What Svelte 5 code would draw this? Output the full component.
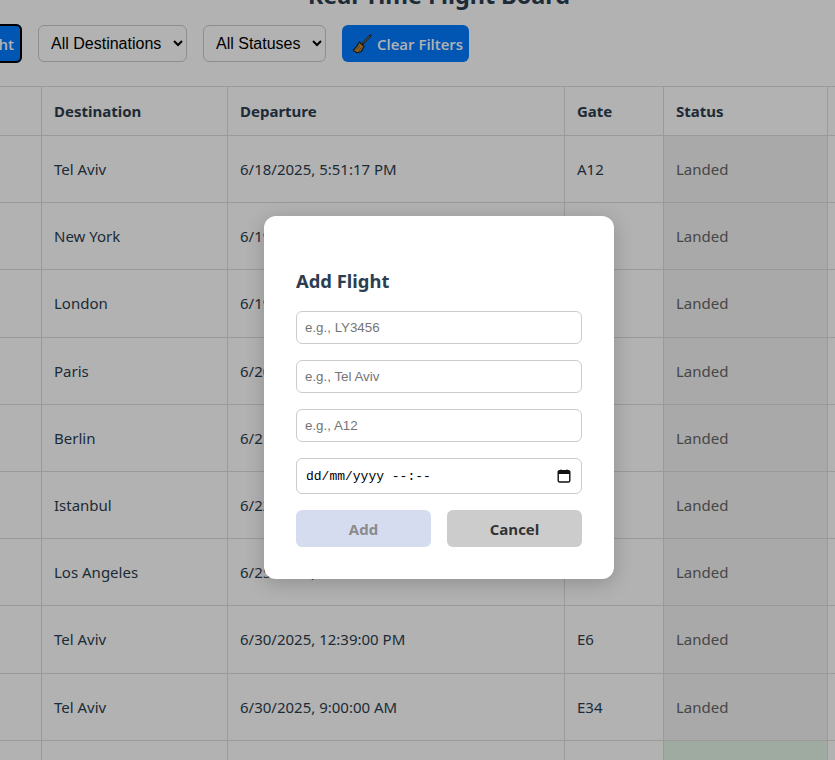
<script>
  const rows = [
    ['LY001', 'Tel Aviv', '6/18/2025, 5:51:17 PM', 'A12'],
    ['LY002', 'New York', '6/19/2025, 8:15:00 AM', 'B7'],
    ['LY003', 'London', '6/19/2025, 2:30:00 PM', 'C3'],
    ['LY004', 'Paris', '6/20/2025, 9:45:00 AM', 'D9'],
    ['LY005', 'Berlin', '6/21/2025, 11:20:00 AM', 'A4'],
    ['LY006', 'Istanbul', '6/22/2025, 4:05:00 PM', 'F2'],
    ['LY007', 'Los Angeles', '6/25/2025, 7:40:00 PM', 'G8'],
    ['LY008', 'Tel Aviv', '6/30/2025, 12:39:00 PM', 'E6'],
    ['LY009', 'Tel Aviv', '6/30/2025, 9:00:00 AM', 'E34'],
  ];
</script>

<div class="viewport">
  <div class="page">
    <h1>Real-Time Flight Board</h1>
    <div class="controls">
      <button class="btn add">Add Flight</button>
      <select><option>All Destinations</option></select>
      <select><option>All Statuses</option></select>
      <button class="btn">
        <svg width="20" height="20" viewBox="0 0 20 20" aria-hidden="true">
          <path d="M18.5 1.5 10.5 10" stroke="#2b2b2b" stroke-width="2.4" stroke-linecap="round" fill="none"/>
          <path d="M18.3 1.7 10.8 9.6" stroke="#a87a3e" stroke-width="0.9" fill="none"/>
          <path d="M7.4 8 12 12.4 9.4 17.4 5 18.8 1.2 16.4 4.8 12.4Z" fill="#c08a38" stroke="#1e1e1e" stroke-width="1.1" stroke-linejoin="round"/>
          <path d="M4.5 15.5 7.6 12.2M7 16.6 9.6 13.6" stroke="#6e4a1a" stroke-width="0.9"/>
        </svg>
        Clear Filters
      </button>
    </div>
    <table>
      <colgroup>
        <col class="c1" /><col class="c2" /><col class="c3" /><col class="c4" /><col class="c5" /><col class="c6" />
      </colgroup>
      <thead>
        <tr>
          <th>Flight</th><th>Destination</th><th>Departure</th><th>Gate</th><th>Status</th><th>Actions</th>
        </tr>
      </thead>
      <tbody>
        {#each rows as r}
          <tr>
            <td>{r[0]}</td><td>{r[1]}</td><td>{r[2]}</td><td>{r[3]}</td>
            <td class="landed">Landed</td><td></td>
          </tr>
        {/each}
        <tr>
          <td></td><td></td><td></td><td></td><td class="ontime"></td><td></td>
        </tr>
      </tbody>
    </table>
  </div>

  <div class="overlay">
    <div class="modal">
      <h2>Add Flight</h2>
      <input type="text" placeholder="e.g., LY3456" />
      <input type="text" placeholder="e.g., Tel Aviv" />
      <input type="text" placeholder="e.g., A12" />
      <div class="date">
        <span>dd/mm/yyyy --:--</span>
        <svg width="14" height="14" viewBox="0 0 14 14" aria-hidden="true">
          <path d="M2.6 1.6h8.8a1.4 1.4 0 0 1 1.4 1.4v8.6a1.4 1.4 0 0 1-1.4 1.4H2.6a1.4 1.4 0 0 1-1.4-1.4V3a1.4 1.4 0 0 1 1.4-1.4Z" fill="none" stroke="#111" stroke-width="1.4"/>
          <rect x="1.2" y="2" width="11.6" height="3" fill="#111"/>
          <rect x="3.4" y="0.6" width="1.4" height="2" fill="#111"/>
          <rect x="9.2" y="0.6" width="1.4" height="2" fill="#111"/>
        </svg>
      </div>
      <div class="actions">
        <button class="primary" disabled>Add</button>
        <button class="cancel">Cancel</button>
      </div>
    </div>
  </div>
</div>

<style>
  :global(body) { margin: 0; background: #fff; }
  .viewport {
    position: relative;
    width: 835px;
    height: 760px;
    overflow: hidden;
    font-family: "Noto Sans", "Open Sans", sans-serif;
  }
  .page { margin: -24px 0 0 -100px; width: 1035px; }
  h1 {
    margin: 0;
    height: 48px;
    width: 1078px;
    text-align: center;
    font-size: 23.4px;
    line-height: 38px;
    font-weight: 700;
    color: #2c3e50;
  }
  .controls {
    display: flex;
    align-items: center;
    gap: 16px;
    height: 37px;
    margin-bottom: 24px;
    padding-left: 14px;
    margin-top: 1px;
  }
  select {
    height: 37px;
    padding: 0 8px;
    font: 16px "Liberation Sans", Arial, sans-serif;
    border: 1px solid #ccc;
    border-radius: 6px;
    background: #fff;
    color: #000;
    box-sizing: border-box;
  }
  select:first-of-type { width: 149px; }
  select:last-of-type { width: 123px; }
  .btn {
    display: flex;
    align-items: center;
    gap: 5px;
    height: 37px;
    padding: 0 6px 0 10px;
    font: 600 15px "Open Sans", sans-serif;
    color: #fff;
    background: #007bff;
    border: 0;
    border-radius: 6px;
    white-space: nowrap;
  }
  .add {
    width: 108px;
    height: 39px;
    justify-content: flex-end;
    outline: 2px solid #000;
    outline-offset: -2px;
    padding-right: 8px;
  }
  table {
    table-layout: fixed;
    width: 1035px;
    border-collapse: collapse;
    color: #2c3e50;
    font-size: 15px;
  }
  .c1 { width: 141px; }
  .c2 { width: 186px; }
  .c3 { width: 337px; }
  .c4 { width: 99px; }
  .c5 { width: 164px; }
  .c6 { width: 108px; }
  th, td {
    border: 1px solid #ddd;
    padding: 0 12px;
    text-align: left;
  }
  th { height: 49px; box-sizing: border-box; font-weight: 700; }
  tbody tr { height: 67.2px; }
  .landed { background: #f2f2f2; color: #666; }
  .ontime { background: #e4f4e6; }
  .overlay {
    position: absolute;
    inset: 0;
    background: rgba(0, 0, 0, 0.3);
    display: flex;
    align-items: flex-start;
    padding: 216px 0 0 264px;
    box-sizing: border-box;
  }
  .modal {
    width: 350px;
    height: 363px;
    box-sizing: border-box;
    padding: 51px 32px 32px;
    background: #fff;
    border-radius: 12px;
    box-shadow: 0 4px 20px rgba(0, 0, 0, 0.2);
    display: flex;
    flex-direction: column;
    gap: 16px;
  }
  h2 {
    margin: 0 0 1px;
    font-size: 18.4px;
    line-height: 27px;
    font-weight: 700;
    color: #2c3e50;
  }
  input, .date {
    box-sizing: border-box;
    width: 100%;
    height: 33px;
    padding: 0 8px;
    border: 1px solid #ccc;
    border-radius: 6px;
    font: 13.33px "Liberation Sans", Arial, sans-serif;
    outline: none;
  }
  input::placeholder { color: #757575; }
  .date {
    height: 36px;
    padding-left: 9px;
    display: flex;
    align-items: center;
    justify-content: space-between;
    font: 13px "Liberation Mono", "DejaVu Sans Mono", monospace;
    color: #000;
    padding-right: 10px;
  }
  .actions { display: flex; gap: 16px; }
  .actions button {
    flex: 1;
    height: 37px;
    border: 0;
    border-radius: 6px;
    font: 700 15px "Open Sans", sans-serif;
  }
  .primary { background: #d6dcf0; color: #8a8a8a; }
  .cancel { background: #ccc; color: #333; }
</style>
